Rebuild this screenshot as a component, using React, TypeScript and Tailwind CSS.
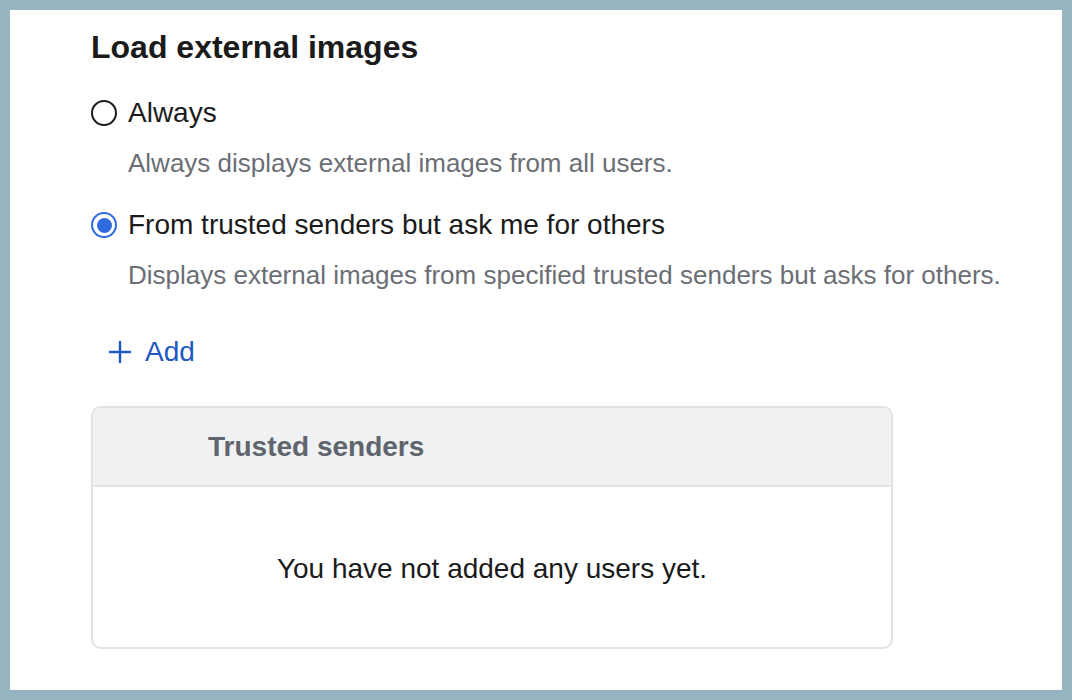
import React from "react";

export default function App() {
  return (
    <div className="w-[1072px] h-[700px] bg-[#95b3c0] p-[10px]" style={{ fontFamily: '"Liberation Sans", Arial, sans-serif' }}>
      <div className="w-full h-full bg-white pl-[81px] pt-[17px] flex flex-col">
        <h2 className="text-[32px] leading-[40px] font-bold text-[#1b1b1b]">Load external images</h2>

        <div className="mt-[30px] flex items-center h-[32px]">
          <span className="w-[26px] h-[26px] rounded-full border-2 border-[#1b1b1b] box-border" />
          <span className="ml-[11px] text-[28px] leading-[32px] text-[#1b1b1b]">Always</span>
        </div>
        <p className="mt-[18px] ml-[37px] text-[26px] leading-[32px] text-[#6b6e75]">
          Always displays external images from all users.
        </p>

        <div className="mt-[30px] flex items-center h-[32px]">
          <span className="w-[26px] h-[26px] rounded-full border-2 border-[#2f6bdf] flex items-center justify-center box-border">
            <span className="w-[15px] h-[15px] rounded-full bg-[#2f6bdf]" />
          </span>
          <span className="ml-[11px] text-[28px] leading-[32px] text-[#1b1b1b]">From trusted senders but ask me for others</span>
        </div>
        <p className="mt-[18px] ml-[37px] text-[26px] leading-[32px] text-[#6b6e75]">
          Displays external images from specified trusted senders but asks for others.
        </p>

        <div className="mt-[45px] ml-[17px] flex items-center h-[32px] text-[#1f57c3]">
          <svg width="24" height="24" viewBox="0 0 24 24" fill="none" stroke="currentColor" strokeWidth="2.4">
            <path d="M12 1v22M1 12h22" />
          </svg>
          <span className="ml-[13px] text-[28px] leading-[32px]">Add</span>
        </div>

        <div className="mt-[38px] w-[802px] h-[243px] border-2 border-[#e3e3e4] rounded-[10px] overflow-hidden flex flex-col">
          <div className="h-[79px] bg-[#f0f1f3] border-b-2 border-[#e3e3e4] flex items-center pl-[115px]">
            <span className="text-[28px] font-bold text-[#60646c]">Trusted senders</span>
          </div>
          <div className="flex-1 flex items-center justify-center pt-[4px]">
            <span className="text-[28px] text-[#1b1b1b]">You have not added any users yet.</span>
          </div>
        </div>
      </div>
    </div>
  );
}
